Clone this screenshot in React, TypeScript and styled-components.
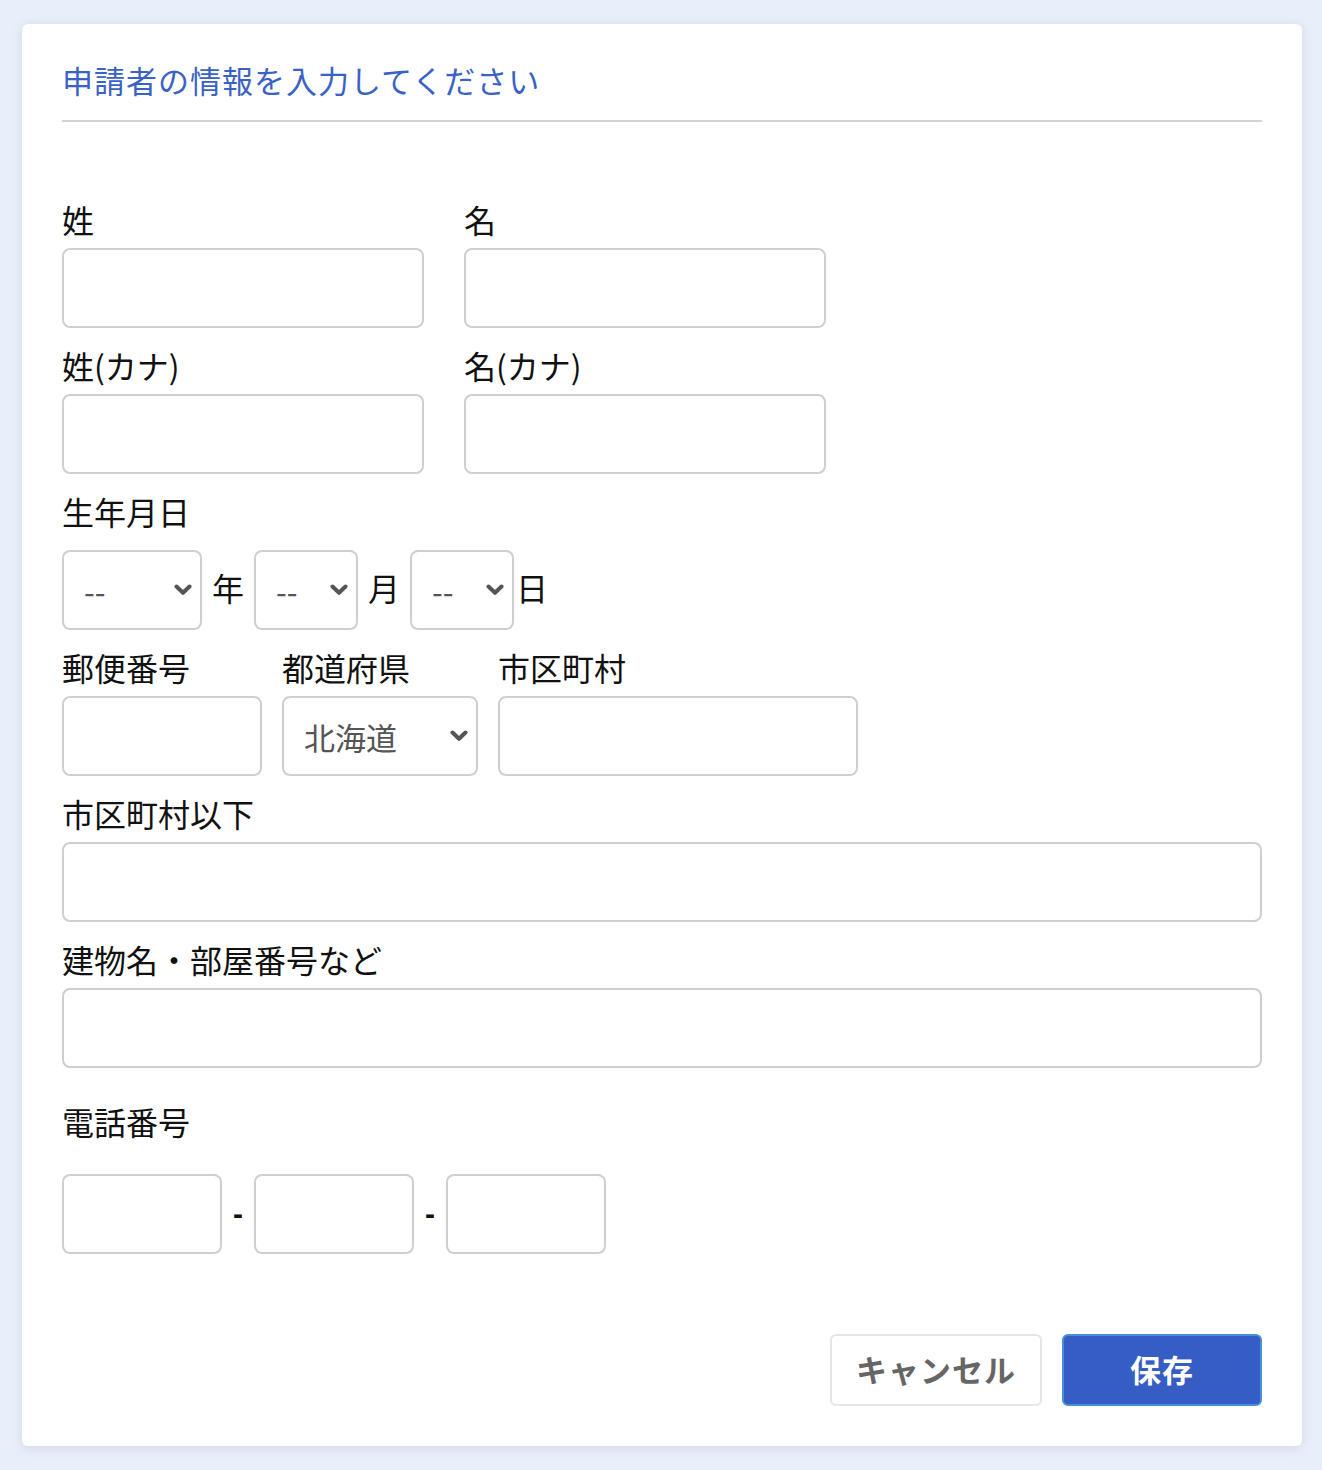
import styled, { createGlobalStyle } from 'styled-components';

const GlobalStyle = createGlobalStyle`
  html, body {
    margin: 0;
    padding: 0;
    background: #e9effa;
  }
  body {
    font-family: "Noto Sans CJK JP", "Liberation Sans", sans-serif;
    color: #111;
  }
`;

const Page = styled.div`
  padding: 24px 20px 24px 22px;
`;
const Card = styled.div`
  background: #fff;
  border-radius: 6px;
  box-shadow: 0 2px 12px rgba(90, 110, 150, 0.18);
  padding: 34px 40px 40px;
  box-sizing: border-box;
  height: 1422px;
  display: flex;
  flex-direction: column;
`;
const Title = styled.h1`
  margin: 0;
  font-size: 31px;
  font-weight: 400;
  line-height: 44px;
  padding-bottom: 18px;
  letter-spacing: 1px;
  color: #3a62c6;
  border-bottom: 2px solid #d2d2d2;
`;
const Form = styled.div`
  margin-top: 78px;
  display: flex;
  flex-direction: column;
  gap: 18px;
`;
const Row = styled.div<{ $gap?: number }>`
  display: flex;
  gap: ${(p) => p.$gap ?? 40}px;
`;
const Field = styled.div<{ $width?: number; $top?: number }>`
  display: flex;
  flex-direction: column;
  width: ${(p) => (p.$width ? `${p.$width}px` : '100%')};
  margin-top: ${(p) => p.$top ?? 0}px;
`;
const Label = styled.label<{ $bottom?: number }>`
  font-size: 32px;
  line-height: 38px;
  padding-bottom: 10px;
  color: #111;
  margin-bottom: ${(p) => p.$bottom ?? 0}px;
`;
const Input = styled.input<{ $width?: number }>`
  box-sizing: border-box;
  width: ${(p) => (p.$width ? `${p.$width}px` : '100%')};
  height: 80px;
  border: 2px solid #cfcfcf;
  border-radius: 8px;
  font-size: 30px;
  padding: 0 20px;
  font-family: inherit;
  outline: none;
`;
const SelectWrap = styled.div<{ $width: number }>`
  position: relative;
  width: ${(p) => p.$width}px;
  height: 80px;
  flex-shrink: 0;
`;
const Select = styled.select`
  appearance: none;
  -webkit-appearance: none;
  box-sizing: border-box;
  width: 100%;
  height: 100%;
  border: 2px solid #cfcfcf;
  border-radius: 8px;
  background: #fff;
  color: #555;
  font-size: 31px;
  font-family: inherit;
  padding: 0 0 0 20px;
  outline: none;
`;
const Chevron = styled.svg`
  position: absolute;
  right: 10px;
  top: 50%;
  transform: translateY(-50%);
  width: 18px;
  height: 12px;
  pointer-events: none;
`;
const DateRow = styled.div`
  display: flex;
  align-items: center;
  margin-top: 10px;
`;
const Unit = styled.span<{ $left: number; $right: number }>`
  flex-shrink: 0;
  font-size: 32px;
  line-height: 38px;
  padding-bottom: 7px;
  color: #111;
  margin: 0 ${(p) => p.$right}px 0 ${(p) => p.$left}px;
`;
const PhoneRow = styled.div`
  display: flex;
  align-items: center;
`;
const Dash = styled.span`
  width: 32px;
  text-align: center;
  font-size: 30px;
  color: #111;
  font-family: "Liberation Sans", sans-serif;
  font-weight: 700;
`;
const Footer = styled.div`
  margin-top: auto;
  display: flex;
  justify-content: flex-end;
  gap: 20px;
`;
const Button = styled.button<{ $primary?: boolean }>`
  box-sizing: border-box;
  height: 72px;
  width: ${(p) => (p.$primary ? 200 : 212)}px;
  border-radius: 6px;
  font-family: inherit;
  font-size: 31px;
  font-weight: 700;
  letter-spacing: 1px;
  line-height: 1;
  padding: 0 0 4px;
  cursor: pointer;
  border: 2px solid ${(p) => (p.$primary ? '#4a8fdc' : '#e6e6e6')};
  background: ${(p) => (p.$primary ? '#355dc4' : '#fff')};
  color: ${(p) => (p.$primary ? '#fff' : '#666')};
`;

const Dropdown = ({ width, value }: { width: number; value: string }) => (
  <SelectWrap $width={width}>
    <Select defaultValue={value}>
      <option>{value}</option>
    </Select>
    <Chevron viewBox="0 0 18 12">
      <path d="M2.5 2.5 L9 8.8 L15.5 2.5" fill="none" stroke="#555" strokeWidth="4" strokeLinecap="round" strokeLinejoin="round" />
    </Chevron>
  </SelectWrap>
);

const App = () => {
  return (
    <Page>
      <GlobalStyle />
      <Card>
        <Title>申請者の情報を入力してください</Title>
        <Form>
          <Row>
            <Field $width={362}>
              <Label>姓</Label>
              <Input />
            </Field>
            <Field $width={362}>
              <Label>名</Label>
              <Input />
            </Field>
          </Row>
          <Row>
            <Field $width={362}>
              <Label>姓(カナ)</Label>
              <Input />
            </Field>
            <Field $width={362}>
              <Label>名(カナ)</Label>
              <Input />
            </Field>
          </Row>
          <Field>
            <Label>生年月日</Label>
            <DateRow>
              <Dropdown width={140} value="--" />
              <Unit $left={10} $right={10}>年</Unit>
              <Dropdown width={104} value="--" />
              <Unit $left={10} $right={10}>月</Unit>
              <Dropdown width={104} value="--" />
              <Unit $left={2} $right={0}>日</Unit>
            </DateRow>
          </Field>
          <Row $gap={20}>
            <Field $width={200}>
              <Label>郵便番号</Label>
              <Input />
            </Field>
            <Field $width={196}>
              <Label>都道府県</Label>
              <Dropdown width={196} value="北海道" />
            </Field>
            <Field $width={360}>
              <Label>市区町村</Label>
              <Input />
            </Field>
          </Row>
          <Field>
            <Label>市区町村以下</Label>
            <Input />
          </Field>
          <Field>
            <Label>建物名・部屋番号など</Label>
            <Input />
          </Field>
          <Field $top={16}>
            <Label $bottom={24}>電話番号</Label>
            <PhoneRow>
              <Input $width={160} />
              <Dash>-</Dash>
              <Input $width={160} />
              <Dash>-</Dash>
              <Input $width={160} />
            </PhoneRow>
          </Field>
        </Form>
        <Footer>
          <Button>キャンセル</Button>
          <Button $primary>保存</Button>
        </Footer>
      </Card>
    </Page>
  );
};

export default App;
